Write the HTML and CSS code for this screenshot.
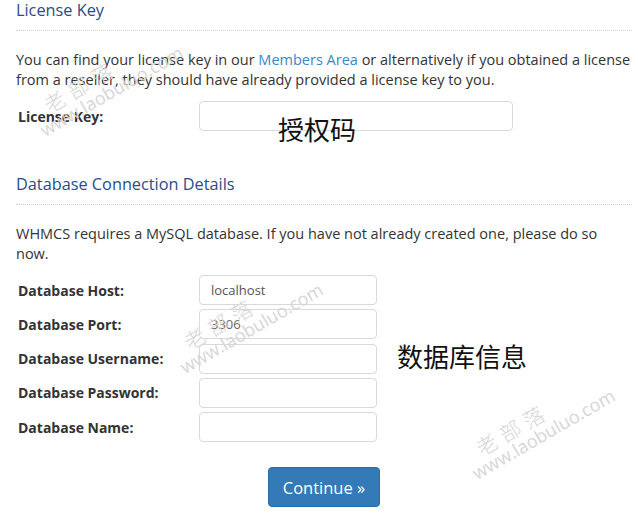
FILE: index.html
```html
<!DOCTYPE html>
<html lang="en">
<head>
  <meta charset="UTF-8">
  <title>WHMCS Installer</title>
  <link rel="stylesheet" href="styles.css">
</head>
<body>

  <div class="container">
    <h2 class="section-title">License Key</h2>
    <p>You can find your license key in our <a href="#">Members Area</a> or alternatively if you obtained a license from a reseller, they should have already provided a license key to you.</p>

    <div class="form-row">
      <label for="licenseKey">License Key:</label>
      <input type="text" id="licenseKey" class="wide">
    </div>

    <h2 class="section-title second">Database Connection Details</h2>
    <p>WHMCS requires a MySQL database. If you have not already created one, please do so now.</p>

    <div class="form-rows">
      <div class="form-row">
        <label for="dbHost">Database Host:</label>
        <input type="text" id="dbHost" value="localhost">
      </div>
      <div class="form-row">
        <label for="dbPort">Database Port:</label>
        <input type="text" id="dbPort" placeholder="3306">
      </div>
      <div class="form-row">
        <label for="dbUser">Database Username:</label>
        <input type="text" id="dbUser">
      </div>
      <div class="form-row">
        <label for="dbPass">Database Password:</label>
        <input type="password" id="dbPass">
      </div>
      <div class="form-row">
        <label for="dbName">Database Name:</label>
        <input type="text" id="dbName">
      </div>
    </div>

    <div class="actions">
      <button type="submit">Continue &raquo;</button>
    </div>

    <!-- annotations added on the screenshot -->
    <div class="note note-license">授权码</div>
    <div class="note note-db">数据库信息</div>

    <div class="watermark wm-1"><span class="wm-cn">老部落</span><span class="wm-url">www.laobuluo.com</span></div>
    <div class="watermark wm-2"><span class="wm-cn">老部落</span><span class="wm-url">www.laobuluo.com</span></div>
    <div class="watermark wm-3"><span class="wm-cn">老部落</span><span class="wm-url">www.laobuluo.com</span></div>
  </div>

</body>
</html>
```

FILE: styles.css
```css
body { margin: 0; background: #fff; font-family: "Open Sans", "Noto Sans", sans-serif; color: #333; }
.container { position: relative; width: 616px; padding: 0 6px 0 16px; overflow: hidden; height: 516px; }

.section-title { margin: 0; padding-bottom: 10px; border-bottom: 1px dotted #cfcfcf; font-size: 16.3px; font-weight: normal; line-height: 20px; color: #2b4c87; }
.section-title.second { margin-top: 43px; }

p { margin: 19px 0 0; font-size: 14.5px; line-height: 20px; }
p a { color: #3a87c8; text-decoration: none; }

.form-row { display: flex; align-items: center; margin-top: 11px; }
.form-rows { display: flex; flex-direction: column; gap: 4.25px; margin-top: 11px; }
.form-rows .form-row { margin-top: 0; }
label { width: 181px; padding-left: 2px; font-size: 14px; font-weight: bold; color: #333; }
input { box-sizing: border-box; width: 178px; height: 30px; padding: 0 11px; border: 1px solid #d9d9d9; border-radius: 4px; font-family: "Open Sans", sans-serif; font-size: 13px; color: #555; background: #fff; }
input::placeholder { color: #666; }
input.wide { width: 314px; }

.actions { display: flex; justify-content: center; margin-top: 25px; }
button { width: 112px; height: 40px; background-color: #337ab7; color: #fff; border: 1px solid #2e6da4; border-radius: 4px; font-family: "Open Sans", sans-serif; font-size: 16.5px; cursor: pointer; }

.note { position: absolute; font-family: "Noto Sans CJK SC", sans-serif; color: #111; line-height: 1; }
.note-license { left: 278px; top: 116px; font-size: 26px; }
.note-db { left: 397px; top: 343px; font-size: 26px; }

.watermark { position: absolute; display: flex; flex-direction: column; color: #d6d6d6; line-height: 1; transform: rotate(-30deg); transform-origin: left bottom; pointer-events: none; }
.wm-cn { font-family: "Noto Sans CJK SC", sans-serif; font-size: 21px; letter-spacing: 6px; padding-left: 16px; font-weight: 300; }
.wm-url { font-size: 18px; }
.wm-1 { left: 46px; top: 100px; }
.wm-2 { left: 186px; top: 337px; }
.wm-3 { left: 478px; top: 443px; }
```
